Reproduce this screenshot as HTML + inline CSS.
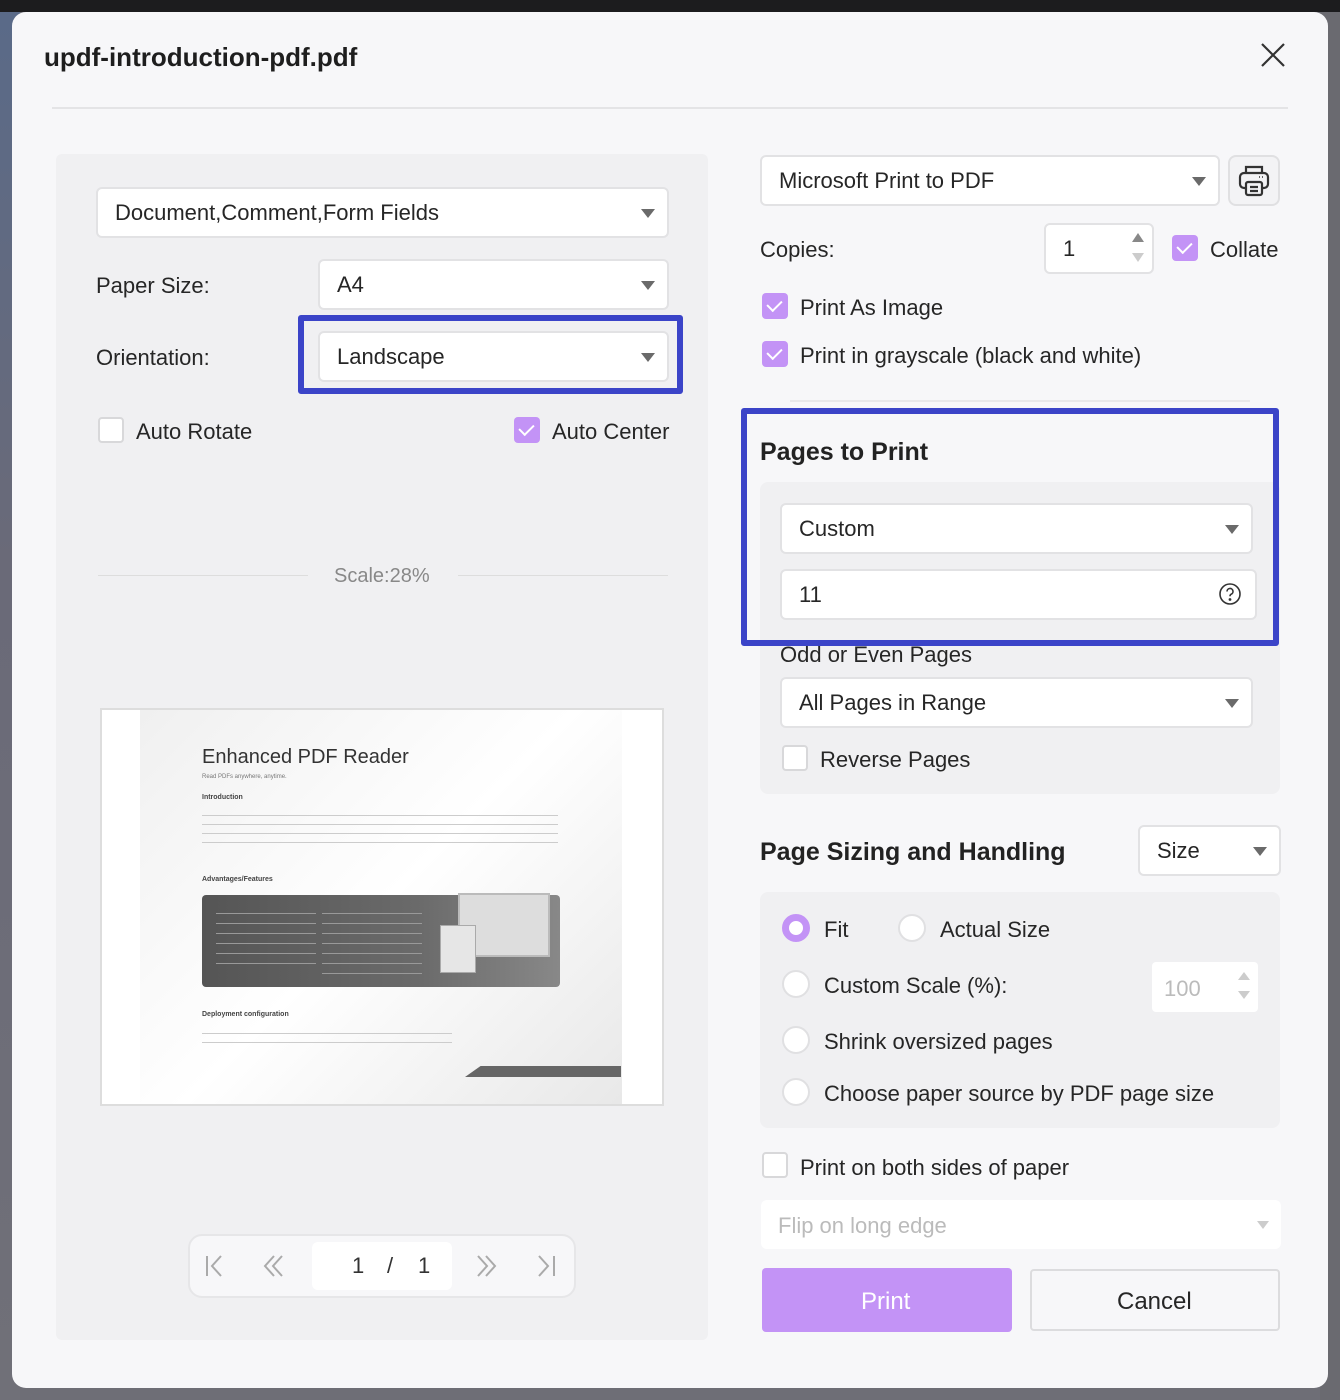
<!DOCTYPE html>
<html><head><meta charset="utf-8"><style>
*{box-sizing:border-box;margin:0;padding:0}
body{width:1340px;height:1400px;position:relative;overflow:hidden;background:#6e6e76;font-family:"Liberation Sans",sans-serif;color:#222}
.a{position:absolute}
.topbar{left:0;top:0;width:1340px;height:12px;background:#1c1c1e}
.lstrip{left:0;top:12px;width:20px;height:1388px;background:linear-gradient(#5a6a88,#6a6a78 40%,#707078)}
.rstrip{left:1320px;top:12px;width:20px;height:1388px;background:#6a6a70}
.dlg{left:12px;top:12px;width:1316px;height:1376px;background:#f7f7f9;border-radius:14px}
.t{font-size:22px;color:#262626;white-space:nowrap}
.sel{background:#fff;border:2px solid #e2e2e4;border-radius:6px}
.sel .t{position:absolute;left:17px;top:50%;transform:translateY(-50%)}
.arr{position:absolute;right:12px;top:50%;margin-top:-4px;width:0;height:0;border-left:7px solid transparent;border-right:7px solid transparent;border-top:9px solid #6a6a6a}
.cb{width:26px;height:26px;border-radius:4px}
.on{background:#c393f6}
.on:after{content:"";position:absolute;left:8px;top:4px;width:7px;height:12px;border:solid #fff;border-width:0 2px 2px 0;transform:rotate(45deg)}
.off{background:#fff;border:2px solid #d8d8da}
.rad{width:28px;height:28px;border-radius:50%;background:#fff;border:2px solid #e0e0e2}
.blue{border:6px solid #3b44c8;border-radius:3px}
</style></head><body>
<div class="a topbar"></div><div class="a lstrip"></div><div class="a rstrip"></div>
<div class="a dlg"></div>
<div class="a t" style="left:44px;top:42px;font-size:26px;font-weight:bold;color:#1e1e1e">updf-introduction-pdf.pdf</div>
<svg class="a" style="left:1260px;top:42px" width="26" height="26" viewBox="0 0 26 26"><path d="M2 2L24 24M24 2L2 24" stroke="#333" stroke-width="2.2"/></svg>
<div class="a" style="left:52px;top:107px;width:1236px;height:2px;background:#e4e4e6"></div>

<div class="a" style="left:56px;top:154px;width:652px;height:1186px;background:#f0f0f2;border-radius:6px"></div>
<div class="a sel" style="left:96px;top:187px;width:573px;height:51px"><span class="t">Document,Comment,Form Fields</span><i class="arr"></i></div>
<div class="a t" style="left:96px;top:273px">Paper Size:</div>
<div class="a sel" style="left:318px;top:259px;width:351px;height:51px"><span class="t">A4</span><i class="arr"></i></div>
<div class="a t" style="left:96px;top:345px">Orientation:</div>
<div class="a blue" style="left:298px;top:315px;width:385px;height:79px"></div>
<div class="a sel" style="left:318px;top:331px;width:351px;height:51px"><span class="t">Landscape</span><i class="arr"></i></div>
<div class="a cb off" style="left:98px;top:417px"></div>
<div class="a t" style="left:136px;top:419px">Auto Rotate</div>
<div class="a cb on" style="left:514px;top:417px"></div>
<div class="a t" style="left:552px;top:419px">Auto Center</div>
<div class="a" style="left:98px;top:575px;width:210px;height:1px;background:#ddd"></div>
<div class="a" style="left:458px;top:575px;width:210px;height:1px;background:#ddd"></div>
<div class="a t" style="left:334px;top:565px;font-size:20px;color:#888">Scale:28%</div>

<div class="a" style="left:100px;top:708px;width:564px;height:398px;background:#fff;border:2px solid #ddd"></div>
<div class="a" style="left:140px;top:710px;width:482px;height:394px;background:linear-gradient(135deg,#f0f0f0,#fff 50%,#e8e8e8)"></div>
<div class="a" style="left:202px;top:746px;font-size:20px;color:#333">Enhanced PDF Reader</div>
<div class="a" style="left:202px;top:774px;font-size:6px;color:#777">Read PDFs anywhere, anytime.</div>
<div class="a" style="left:202px;top:794px;font-size:7px;font-weight:bold;color:#444">Introduction</div>
<div class="a" style="left:202px;top:812px;width:356px;height:36px;background:repeating-linear-gradient(#fff0 0 3px,#ccc 3px 4px,#fff0 4px 9px)"></div>
<div class="a" style="left:202px;top:876px;font-size:7px;font-weight:bold;color:#444">Advantages/Features</div>
<div class="a" style="left:202px;top:895px;width:358px;height:92px;background:linear-gradient(90deg,#555,#6a6a6a 60%,#888);border-radius:4px"></div>
<div class="a" style="left:216px;top:906px;width:100px;height:60px;background:repeating-linear-gradient(#fff0 0 7px,#999 7px 8px,#fff0 8px 10px)"></div>
<div class="a" style="left:322px;top:906px;width:100px;height:70px;background:repeating-linear-gradient(#fff0 0 7px,#999 7px 8px,#fff0 8px 10px)"></div>
<div class="a" style="left:458px;top:893px;width:92px;height:64px;background:#ddd;border:2px solid #bbb"></div>
<div class="a" style="left:440px;top:925px;width:36px;height:48px;background:#e6e6e6;border:1px solid #aaa"></div>
<div class="a" style="left:202px;top:1011px;font-size:7px;font-weight:bold;color:#444">Deployment configuration</div>
<div class="a" style="left:202px;top:1030px;width:250px;height:18px;background:repeating-linear-gradient(#fff0 0 3px,#ccc 3px 4px,#fff0 4px 9px)"></div>
<div class="a" style="left:465px;top:1066px;width:156px;height:11px;background:#666;clip-path:polygon(10% 0,100% 0,100% 100%,0 100%)"></div>

<div class="a" style="left:188px;top:1234px;width:388px;height:64px;background:#f7f7f9;border:2px solid #e6e6e8;border-radius:14px"></div>
<div class="a" style="left:312px;top:1242px;width:140px;height:48px;background:#fff;border-radius:6px"></div>
<svg class="a" style="left:200px;top:1252px" width="370" height="28" viewBox="0 0 370 28" fill="none" stroke="#aaa" stroke-width="2"><path d="M7 4v20M21 4l-9 10 9 10"/><path d="M74 4l-9 10 9 10M82 4l-9 10 9 10"/><path d="M278 4l9 10-9 10M286 4l9 10-9 10"/><path d="M339 4l9 10-9 10M354 4v20"/></svg>
<div class="a t" style="left:352px;top:1253px;color:#333">1</div>
<div class="a t" style="left:387px;top:1253px;color:#333">/</div>
<div class="a t" style="left:418px;top:1253px;color:#333">1</div>

<div class="a sel" style="left:760px;top:155px;width:460px;height:51px"><span class="t">Microsoft Print to PDF</span><i class="arr"></i></div>
<div class="a" style="left:1228px;top:155px;width:52px;height:51px;background:#f3f3f5;border:2px solid #e0e0e2;border-radius:8px"></div>
<svg class="a" style="left:1238px;top:164px" width="32" height="34" viewBox="0 0 32 34" fill="none" stroke="#333" stroke-width="2.2"><path d="M8 9V3h16v6"/><rect x="2" y="9" width="28" height="15" rx="4"/><rect x="8" y="18" width="16" height="13" rx="2" fill="#f3f3f5"/><path d="M12 23h8M12 27h8"/><path d="M21 13h1M24 13h1" stroke-width="1.6"/></svg>
<div class="a t" style="left:760px;top:237px">Copies:</div>
<div class="a sel" style="left:1044px;top:223px;width:110px;height:51px"><span class="t">1</span></div>
<div class="a" style="left:1132px;top:233px;border-left:6px solid transparent;border-right:6px solid transparent;border-bottom:9px solid #888"></div>
<div class="a" style="left:1132px;top:253px;border-left:6px solid transparent;border-right:6px solid transparent;border-top:9px solid #ccc"></div>
<div class="a cb on" style="left:1172px;top:235px"></div>
<div class="a t" style="left:1210px;top:237px">Collate</div>
<div class="a cb on" style="left:762px;top:293px"></div>
<div class="a t" style="left:800px;top:295px">Print As Image</div>
<div class="a cb on" style="left:762px;top:341px"></div>
<div class="a t" style="left:800px;top:343px">Print in grayscale (black and white)</div>
<div class="a" style="left:790px;top:400px;width:460px;height:2px;background:#e8e8ea"></div>

<div class="a" style="left:760px;top:482px;width:520px;height:312px;background:#f0f0f2;border-radius:8px"></div>
<div class="a blue" style="left:741px;top:408px;width:538px;height:238px"></div>
<div class="a t" style="left:760px;top:438px;font-size:25px;font-weight:bold;color:#222">Pages to Print</div>
<div class="a sel" style="left:780px;top:503px;width:473px;height:51px"><span class="t">Custom</span><i class="arr"></i></div>
<div class="a sel" style="left:780px;top:569px;width:477px;height:51px"><span class="t">11</span></div>
<svg class="a" style="left:1218px;top:582px" width="24" height="24" viewBox="0 0 24 24" fill="none" stroke="#333" stroke-width="1.6"><circle cx="12" cy="12" r="10"/><path d="M9 9.5a3 3 0 1 1 4 2.8c-.8.4-1 1-1 2"/><circle cx="12" cy="17.5" r=".6" fill="#333"/></svg>
<div class="a t" style="left:780px;top:642px">Odd or Even Pages</div>
<div class="a sel" style="left:780px;top:677px;width:473px;height:51px"><span class="t">All Pages in Range</span><i class="arr"></i></div>
<div class="a cb off" style="left:782px;top:745px"></div>
<div class="a t" style="left:820px;top:747px">Reverse Pages</div>

<div class="a t" style="left:760px;top:838px;font-size:25px;font-weight:bold;color:#222">Page Sizing and Handling</div>
<div class="a sel" style="left:1138px;top:825px;width:143px;height:51px"><span class="t">Size</span><i class="arr"></i></div>
<div class="a" style="left:760px;top:892px;width:520px;height:236px;background:#f0f0f2;border-radius:8px"></div>
<div class="a rad" style="left:782px;top:914px;border:7px solid #c393f6"></div>
<div class="a t" style="left:824px;top:917px">Fit</div>
<div class="a rad" style="left:898px;top:914px"></div>
<div class="a t" style="left:940px;top:917px">Actual Size</div>
<div class="a rad" style="left:782px;top:970px"></div>
<div class="a t" style="left:824px;top:973px">Custom Scale (%):</div>
<div class="a" style="left:1152px;top:962px;width:106px;height:50px;background:#fff;border-radius:4px"></div>
<div class="a t" style="left:1164px;top:976px;color:#bbb">100</div>
<div class="a" style="left:1238px;top:972px;border-left:6px solid transparent;border-right:6px solid transparent;border-bottom:8px solid #ccc"></div>
<div class="a" style="left:1238px;top:991px;border-left:6px solid transparent;border-right:6px solid transparent;border-top:8px solid #ccc"></div>
<div class="a rad" style="left:782px;top:1026px"></div>
<div class="a t" style="left:824px;top:1029px">Shrink oversized pages</div>
<div class="a rad" style="left:782px;top:1078px"></div>
<div class="a t" style="left:824px;top:1081px">Choose paper source by PDF page size</div>

<div class="a cb off" style="left:762px;top:1152px"></div>
<div class="a t" style="left:800px;top:1155px">Print on both sides of paper</div>
<div class="a" style="left:761px;top:1200px;width:520px;height:49px;background:#fff;border-radius:6px"></div>
<div class="a t" style="left:778px;top:1213px;color:#bbb">Flip on long edge</div>
<div class="a" style="left:1257px;top:1221px;border-left:6px solid transparent;border-right:6px solid transparent;border-top:8px solid #ccc"></div>
<div class="a" style="left:762px;top:1268px;width:250px;height:64px;background:#c393f6;border-radius:4px"></div>
<div class="a t" style="left:861px;top:1288px;color:#fff;font-size:24px">Print</div>
<div class="a" style="left:1030px;top:1269px;width:250px;height:62px;background:#f7f7f9;border:2px solid #dcdcde;border-radius:4px"></div>
<div class="a t" style="left:1117px;top:1288px;font-size:24px">Cancel</div>
</body></html>
